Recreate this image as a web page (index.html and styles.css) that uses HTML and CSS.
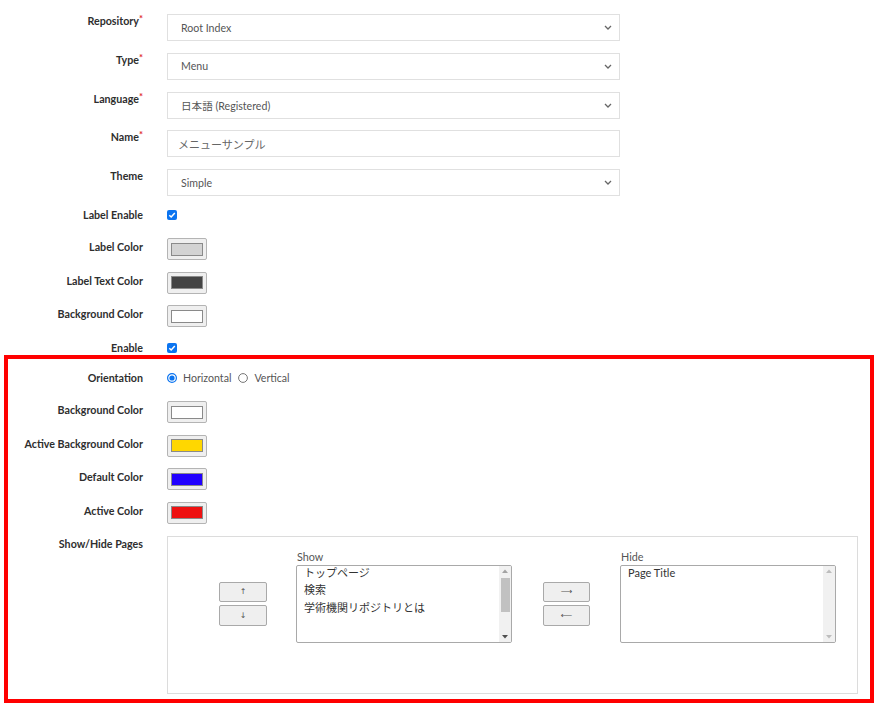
FILE: index.html
```html
<!DOCTYPE html>
<html lang="ja">
<head>
<meta charset="utf-8">
<title>Menu settings</title>
<link rel="stylesheet" href="styles.css">
</head>
<body>
<form class="form">
  <div class="row row--select">
    <div class="label">Repository<span class="req">*</span></div>
    <div class="select"><span>Root Index</span><svg class="chev" width="8" height="5" viewBox="0 0 8 5"><path d="M1 1 L4 4 L7 1" fill="none" stroke="#666" stroke-width="1.3"/></svg></div>
  </div>
  <div class="row row--select">
    <div class="label">Type<span class="req">*</span></div>
    <div class="select"><span>Menu</span><svg class="chev" width="8" height="5" viewBox="0 0 8 5"><path d="M1 1 L4 4 L7 1" fill="none" stroke="#666" stroke-width="1.3"/></svg></div>
  </div>
  <div class="row row--select">
    <div class="label">Language<span class="req">*</span></div>
    <div class="select"><span>日本語 (Registered)</span><svg class="chev" width="8" height="5" viewBox="0 0 8 5"><path d="M1 1 L4 4 L7 1" fill="none" stroke="#666" stroke-width="1.3"/></svg></div>
  </div>
  <div class="row row--select">
    <div class="label">Name<span class="req">*</span></div>
    <div class="select select--input"><span>メニューサンプル</span></div>
  </div>
  <div class="row row--select">
    <div class="label">Theme</div>
    <div class="select"><span>Simple</span><svg class="chev" width="8" height="5" viewBox="0 0 8 5"><path d="M1 1 L4 4 L7 1" fill="none" stroke="#666" stroke-width="1.3"/></svg></div>
  </div>
  <div class="row row--check">
    <div class="label">Label Enable</div>
    <div class="check-wrap"><svg class="check" width="10" height="10" viewBox="0 0 10 10"><rect x="0" y="0" width="10" height="10" rx="2" fill="#0b74f0"/><path d="M2.3 5.2 L4.2 7 L7.8 3" fill="none" stroke="#fff" stroke-width="1.5"/></svg></div>
  </div>
  <div class="row row--swatch">
    <div class="label">Label Color</div>
    <div class="swatch"><span class="swatch-fill fill-lightgray"></span></div>
  </div>
  <div class="row row--swatch">
    <div class="label">Label Text Color</div>
    <div class="swatch"><span class="swatch-fill fill-dark"></span></div>
  </div>
  <div class="row row--swatch">
    <div class="label">Background Color</div>
    <div class="swatch"><span class="swatch-fill fill-white"></span></div>
  </div>
  <div class="row row--check">
    <div class="label">Enable</div>
    <div class="check-wrap"><svg class="check" width="10" height="10" viewBox="0 0 10 10"><rect x="0" y="0" width="10" height="10" rx="2" fill="#0b74f0"/><path d="M2.3 5.2 L4.2 7 L7.8 3" fill="none" stroke="#fff" stroke-width="1.5"/></svg></div>
  </div>

  <div class="outline">
    <div class="row row--check">
      <div class="label">Orientation</div>
      <div class="radios">
        <svg class="radio" width="10" height="10" viewBox="0 0 10 10"><circle cx="5" cy="5" r="4.4" fill="#fff" stroke="#0b74f0" stroke-width="1.2"/><circle cx="5" cy="5" r="2.6" fill="#0b74f0"/></svg>
        <span class="radio-label">Horizontal</span>
        <svg class="radio radio--gap" width="10" height="10" viewBox="0 0 10 10"><circle cx="5" cy="5" r="4.4" fill="#fff" stroke="#767676" stroke-width="1"/></svg>
        <span class="radio-label">Vertical</span>
      </div>
    </div>
    <div class="row row--swatch">
      <div class="label">Background Color</div>
      <div class="swatch"><span class="swatch-fill fill-white"></span></div>
    </div>
    <div class="row row--swatch">
      <div class="label">Active Background Color</div>
      <div class="swatch"><span class="swatch-fill fill-yellow"></span></div>
    </div>
    <div class="row row--swatch">
      <div class="label">Default Color</div>
      <div class="swatch"><span class="swatch-fill fill-blue"></span></div>
    </div>
    <div class="row row--swatch">
      <div class="label">Active Color</div>
      <div class="swatch"><span class="swatch-fill fill-red"></span></div>
    </div>
    <div class="row row--panel">
      <div class="label">Show/Hide Pages</div>
      <div class="panel">
        <div class="btn-col btn-col--left">
          <div class="btn">↑</div>
          <div class="btn">↓</div>
        </div>
        <div class="list-col">
          <div class="list-title">Show</div>
          <div class="listbox">
            <div class="list-items">
              <div class="item">トップページ</div>
              <div class="item">検索</div>
              <div class="item">学術機関リポジトリとは</div>
            </div>
            <div class="scrollbar">
              <svg class="arrow" width="6" height="4" viewBox="0 0 6 4"><path d="M0 4 L3 0.5 L6 4Z" fill="#a3a3a3"/></svg>
              <div class="track"><div class="thumb"></div></div>
              <svg class="arrow" width="6" height="4" viewBox="0 0 6 4"><path d="M0 0 L3 3.5 L6 0Z" fill="#505050"/></svg>
            </div>
          </div>
        </div>
        <div class="btn-col btn-col--mid">
          <div class="btn">⟶</div>
          <div class="btn">⟵</div>
        </div>
        <div class="list-col">
          <div class="list-title">Hide</div>
          <div class="listbox">
            <div class="list-items">
              <div class="item">Page Title</div>
            </div>
            <div class="scrollbar">
              <svg class="arrow" width="6" height="4" viewBox="0 0 6 4"><path d="M0 4 L3 0.5 L6 4Z" fill="#bdbdbd"/></svg>
              <div class="track"></div>
              <svg class="arrow" width="6" height="4" viewBox="0 0 6 4"><path d="M0 0 L3 3.5 L6 0Z" fill="#bdbdbd"/></svg>
            </div>
          </div>
        </div>
      </div>
    </div>
  </div>
</form>
</body>
</html>
```

FILE: styles.css
```css
html, body {
  margin: 0;
  padding: 0;
  background: #fff;
}

body {
  font-family: "Lato", "Noto Sans CJK JP", sans-serif;
  font-size: 10.8px;
  color: #333;
}

.form {
  display: block;
  padding-top: 14px;
}

.row {
  display: flex;
  align-items: flex-start;
}

.row + .row {
  margin-top: 12px;
}

.row--select + .row--select {
  margin-top: 11.75px;
}

.row--check + .row--swatch {
  margin-top: 16px;
}

.row--swatch + .row--swatch {
  margin-top: 11.5px;
}

.row--swatch + .row--check {
  margin-top: 13.5px;
}

.label {
  flex: none;
  width: 143px;
  margin-right: 24px;
  text-align: right;
  font-weight: 700;
  font-size: 10.7px;
  line-height: 14px;
  color: #2e2e2e;
  white-space: nowrap;
}

.outline .label {
  width: 135px;
}

.row--swatch .label {
  margin-top: 2px;
}

.req {
  color: #e0282e;
  font-size: 9.5px;
  vertical-align: top;
  line-height: 10px;
}

/* select / input */
.select {
  box-sizing: border-box;
  width: 453px;
  height: 27px;
  border: 1px solid #e0e0e0;
  background: #fff;
  display: flex;
  align-items: center;
  justify-content: space-between;
  padding: 0 7px 0 13px;
  color: #555;
  font-size: 10.6px;
}

.select--input {
  padding-left: 10px;
  color: #666;
  font-size: 11px;
}

.chev {
  flex: none;
}

/* checkbox */
.check-wrap {
  height: 14px;
  display: flex;
  align-items: center;
}

.check {
  display: block;
}

/* radio */
.radios {
  height: 14px;
  display: flex;
  align-items: center;
  color: #555;
  font-size: 10.6px;
}

.radio {
  display: block;
  flex: none;
}

.radio-label {
  margin-left: 6px;
  line-height: 14px;
}

.radio--gap {
  margin-left: 7px;
}

/* swatch */
.swatch {
  box-sizing: border-box;
  width: 40px;
  height: 22px;
  background: #efefef;
  border: 1px solid #b4b4b4;
  border-radius: 2px;
  display: flex;
  align-items: center;
  justify-content: center;
}

.swatch-fill {
  box-sizing: border-box;
  display: block;
  width: 32px;
  height: 13px;
  border: 1px solid #8a8a8a;
}

.fill-lightgray { background: #d3d3d3; }
.fill-dark { background: #444444; }
.fill-white { background: #ffffff; }
.fill-yellow { background: #ffd700; }
.fill-blue { background: #2000ff; }
.fill-red { background: #ee1111; }

/* outline annotation */
.outline {
  margin: 0.5px 15px 0 4px;
  border: 4px solid #ff0000;
  padding: 12px 0 5px 0;
}

/* show/hide panel */
.panel {
  box-sizing: border-box;
  width: 691px;
  height: 158px;
  border: 1px solid #dcdcdc;
  display: flex;
  align-items: flex-start;
  padding: 13px 0 0 51px;
}

.row--panel .label {
  margin-top: 1px;
}

.btn-col {
  flex: none;
  display: flex;
  flex-direction: column;
  gap: 3px;
  margin-top: 32px;
}

.btn-col--left {
  width: 48px;
  margin-right: 29px;
}

.btn-col--mid {
  width: 47px;
  margin-left: 31px;
  margin-right: 30px;
}

.btn {
  box-sizing: border-box;
  height: 20.5px;
  border: 1px solid #a9a9a9;
  border-radius: 2px;
  background: #efefef;
  color: #555;
  font-family: "DejaVu Sans", sans-serif;
  font-size: 8px;
  display: flex;
  align-items: center;
  justify-content: center;
}

.list-col {
  flex: none;
  width: 216px;
}

.list-title {
  line-height: 13px;
  margin-bottom: 2px;
  color: #555;
  padding-left: 1px;
}

.listbox {
  box-sizing: border-box;
  height: 78px;
  border: 1px solid #a9a9a9;
  border-radius: 2px;
  background: #fff;
  display: flex;
  overflow: hidden;
}

.list-items {
  flex: 1;
  padding-left: 7px;
  margin-top: -2px;
  overflow: hidden;
}

.item {
  line-height: 17.5px;
  font-size: 11px;
  color: #333;
  white-space: nowrap;
}

.scrollbar {
  flex: none;
  width: 12px;
  background: #f1f1f1;
  display: flex;
  flex-direction: column;
  align-items: center;
}

.arrow {
  display: block;
  flex: none;
  margin: 3px 0;
}

.track {
  flex: 1;
  width: 100%;
  padding-top: 2px;
  box-sizing: border-box;
}

.thumb {
  width: 9px;
  height: 34px;
  margin: 0 auto;
  background: #c1c1c1;
}
```
